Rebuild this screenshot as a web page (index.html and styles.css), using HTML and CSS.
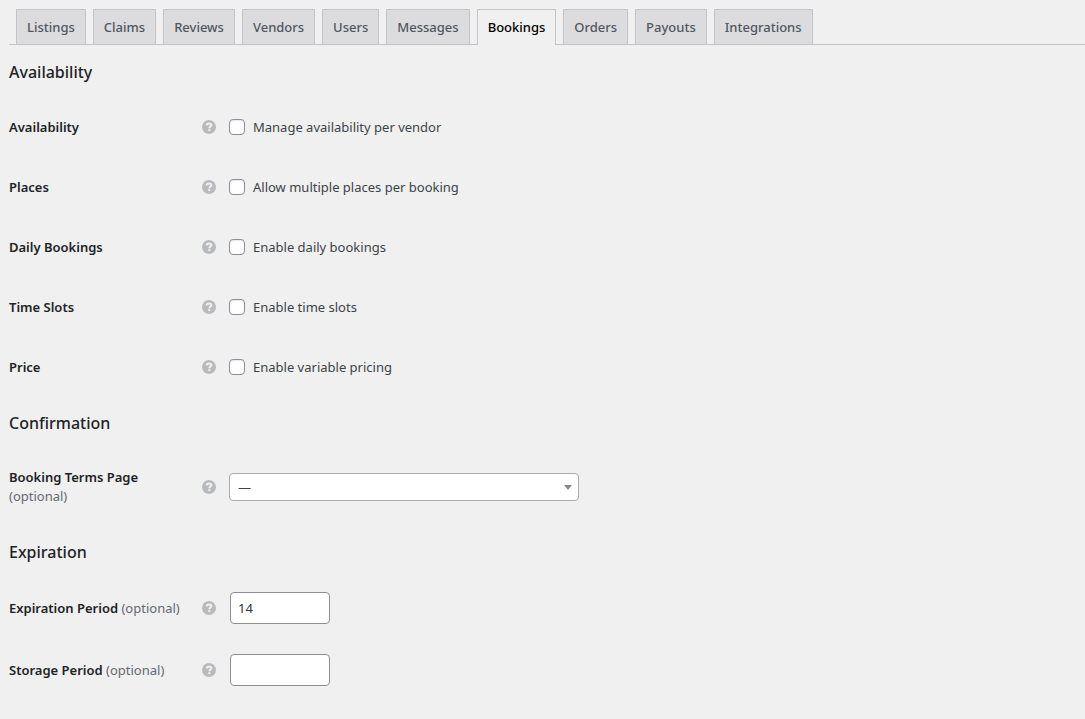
FILE: index.html
```html
<!DOCTYPE html>
<html lang="en">
<head>
    <meta charset="utf-8">
    <title>Settings</title>
    <link rel="stylesheet" href="styles.css">
</head>
<body>
    <svg class="sprite" aria-hidden="true">
        <symbol id="help" viewBox="0 0 14 14">
            <circle cx="7" cy="7" r="7" fill="#b8babd"/>
            <path d="M4.700 5.300C4.800 4 5.800 3.500 7.100 3.500c1.400 0 2.200.6 2.200 1.600 0 1.500-2 1.500-2 3.100" fill="none" stroke="#f0f0f1" stroke-width="2"/>
            <rect x="6.200" y="9.200" width="2.100" height="1.900" fill="#f0f0f1"/>
        </symbol>
    </svg>

    <form class="settings">
        <nav class="tabs">
            <a href="#listings" class="tab">Listings</a>
            <a href="#claims" class="tab">Claims</a>
            <a href="#reviews" class="tab">Reviews</a>
            <a href="#vendors" class="tab">Vendors</a>
            <a href="#users" class="tab">Users</a>
            <a href="#messages" class="tab">Messages</a>
            <a href="#bookings" class="tab tab-active" aria-current="page">Bookings</a>
            <a href="#orders" class="tab">Orders</a>
            <a href="#payouts" class="tab">Payouts</a>
            <a href="#integrations" class="tab">Integrations</a>
        </nav>

        <section class="section">
            <h2>Availability</h2>
            <div class="row">
                <div class="name">Availability</div>
                <svg class="help"><use href="#help"/></svg>
                <label class="check"><input type="checkbox" name="availability"> Manage availability per vendor</label>
            </div>
            <div class="row">
                <div class="name">Places</div>
                <svg class="help"><use href="#help"/></svg>
                <label class="check"><input type="checkbox" name="places"> Allow multiple places per booking</label>
            </div>
            <div class="row">
                <div class="name">Daily Bookings</div>
                <svg class="help"><use href="#help"/></svg>
                <label class="check"><input type="checkbox" name="daily"> Enable daily bookings</label>
            </div>
            <div class="row">
                <div class="name">Time Slots</div>
                <svg class="help"><use href="#help"/></svg>
                <label class="check"><input type="checkbox" name="time"> Enable time slots</label>
            </div>
            <div class="row">
                <div class="name">Price</div>
                <svg class="help"><use href="#help"/></svg>
                <label class="check"><input type="checkbox" name="price"> Enable variable pricing</label>
            </div>
        </section>

        <section class="section">
            <h2>Confirmation</h2>
            <div class="row">
                <label class="name" for="terms">Booking Terms Page <small>(optional)</small></label>
                <svg class="help"><use href="#help"/></svg>
                <div class="select">
                    <select id="terms" name="terms">
                        <option>—</option>
                    </select>
                </div>
            </div>
        </section>

        <section class="section">
            <h2>Expiration</h2>
            <div class="row">
                <label class="name" for="expiration">Expiration Period <small>(optional)</small></label>
                <svg class="help"><use href="#help"/></svg>
                <input class="number" type="text" inputmode="numeric" id="expiration" name="expiration" value="14">
            </div>
            <div class="row">
                <label class="name" for="storage">Storage Period <small>(optional)</small></label>
                <svg class="help"><use href="#help"/></svg>
                <input class="number" type="text" inputmode="numeric" id="storage" name="storage">
            </div>
        </section>
    </form>
</body>
</html>
```
FILE: styles.css
```css
* {
    box-sizing: border-box;
}

body {
    margin: 0;
    padding: 9px 0 0 9px;
    background: #f0f0f0;
    color: #3c434a;
    font-family: "Segoe UI", "Noto Sans", "Open Sans", sans-serif;
    font-size: 13px;
    line-height: 19px;
}

.sprite {
    display: none;
}

.tabs {
    display: flex;
    gap: 7px;
    margin-bottom: 1px;
    padding-left: 7px;
    border-bottom: 1px solid #c3c4c7;
}

.tab {
    padding: 8px 10px 7px;
    border: 1px solid #c3c4c7;
    border-bottom: 0;
    background: #dcdcde;
    color: #50575e;
    font-weight: 500;
    text-decoration: none;
}

.tab-active {
    margin-bottom: -1px;
    padding-bottom: 8px;
    background: #f0f0f0;
    color: #000;
}

.section {
    padding-top: 14px;
}

.section h2 {
    margin: 0 0 13px;
    color: #1d2327;
    font-size: 16px;
    font-weight: 500;
    line-height: 24px;
}

.row {
    display: grid;
    grid-template-columns: 183px 14px 1fr;
    column-gap: 10px;
    align-items: center;
    min-height: 60px;
}

.name {
    padding: 20px 0;
    color: #1d2327;
    font-weight: 600;
}

.name small {
    color: #646970;
    font-size: 13px;
    font-weight: 400;
}

.help {
    width: 14px;
    height: 14px;
}

.check {
    display: flex;
    align-items: center;
    justify-self: start;
    gap: 8px;
    margin-left: 3px;
}

.check input {
    appearance: none;
    width: 16px;
    height: 16px;
    margin: 0;
    border: 1px solid #8c8f94;
    border-radius: 4px;
    background: #fff;
    box-shadow: inset 0 1px 2px rgba(0, 0, 0, 0.1);
}

.check input:checked {
    background: #2271b1;
}

.select {
    display: grid;
    align-items: center;
    width: 100%;
    max-width: 350px;
    margin-left: 3px;
}

.select select {
    appearance: none;
    grid-area: 1 / 1;
    height: 28px;
    padding: 0 20px 0 8px;
    border: 1px solid #aaa;
    border-radius: 4px;
    background: #fff;
    color: #444;
    font: inherit;
}

.select::after {
    content: "";
    grid-area: 1 / 1;
    justify-self: end;
    margin-right: 7px;
    border: 4px solid transparent;
    border-top: 5px solid #888;
    border-bottom: 0;
    pointer-events: none;
}

.number {
    width: 100px;
    height: 32px;
    margin: 15px 0 15px 4px;
    padding: 0 7px;
    border: 1px solid #8c8f94;
    border-radius: 4px;
    background: #fff;
    color: #2c3338;
    font: inherit;
}
```
